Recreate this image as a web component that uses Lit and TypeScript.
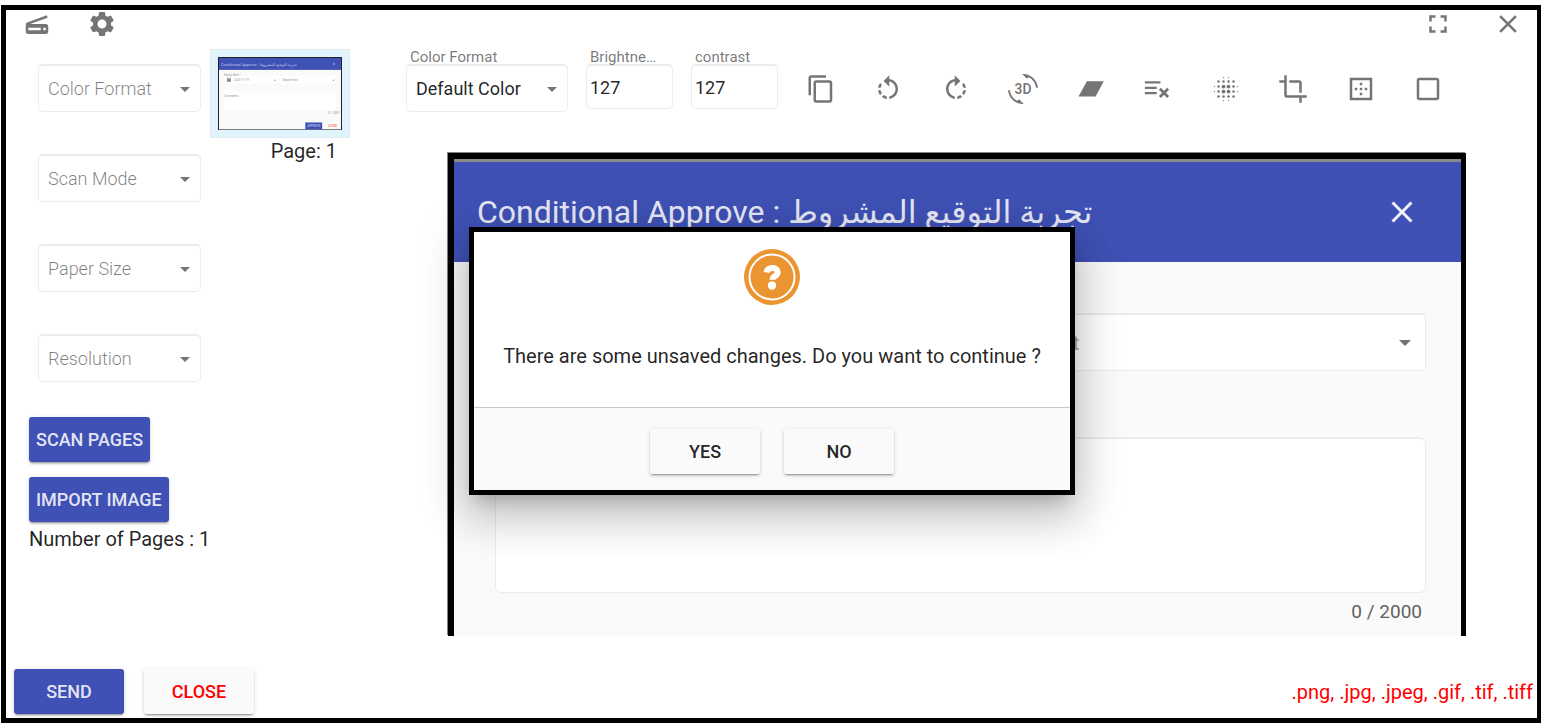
import { LitElement, html, css, svg } from "lit";
import { customElement, state } from "lit/decorators.js";

const dots = (points: number[][], r: number) =>
  points.map(([x, y]) => svg`<circle cx=${x} cy=${y} r=${r}></circle>`);

const icons = {
  scanner: svg`<path d="M4.200 10.700L19.800 5l.7 1.900L6.400 12H19c1.100 0 2 .9 2 2v4c0 1.100-.9 2-2 2H5c-1.100 0-2-.9-2-2v-5.500c0-.8.5-1.600 1.200-1.800zM5 15v2h10v-2zM17 15v2h2v-2z" fill-rule="evenodd"></path>`,
  gear: svg`<path d="M19.140 12.940c.04-.3.060-.610.060-.940 0-.320-.020-.640-.070-.940l2.030-1.580c.180-.140.230-.410.120-.610l-1.920-3.320c-.120-.220-.370-.290-.590-.220l-2.390.960c-.5-.380-1.030-.7-1.620-.940l-.360-2.540c-.040-.240-.240-.410-.480-.410h-3.840c-.240 0-.430.170-.470.410l-.360 2.540c-.590.240-1.130.570-1.620.940l-2.390-.960c-.220-.080-.470 0-.590.220L2.740 8.870c-.120.210-.080.470.120.610l2.030 1.580c-.050.3-.090.630-.090.940s.020.640.070.940l-2.030 1.580c-.180.140-.230.410-.120.610l1.920 3.320c.120.220.370.290.590.220l2.390-.960c.5.380 1.030.7 1.620.940l.360 2.540c.050.240.240.410.480.410h3.840c.240 0 .440-.170.470-.410l.360-2.540c.590-.240 1.130-.560 1.620-.940l2.390.960c.220.080.470 0 .590-.220l1.920-3.320c.120-.220.070-.470-.120-.610l-2.010-1.580zM12 15.600c-1.980 0-3.600-1.620-3.600-3.600s1.620-3.600 3.600-3.600 3.600 1.620 3.600 3.600-1.620 3.600-3.600 3.600z"></path>`,
  fullscreen: svg`<path d="M7 14H5v5h5v-2H7v-3zm-2-4h2V7h3V5H5v5zm12 7h-3v2h5v-5h-2v3zM14 5v2h3v3h2V5h-5z"></path>`,
  close: svg`<path d="M19 6.410L17.590 5 12 10.590 6.410 5 5 6.410 10.590 12 5 17.590 6.410 19 12 13.410 17.590 19 19 17.590 13.410 12z"></path>`,
  copy: svg`<path d="M16 1H4c-1.100 0-2 .9-2 2v14h2V3h12V1zm3 4H8c-1.100 0-2 .9-2 2v14c0 1.100.9 2 2 2h11c1.100 0 2-.9 2-2V7c0-1.100-.9-2-2-2zm0 16H8V7h11v14z"></path>`,
  rotateLeft: svg`<path d="M7.110 8.530L5.700 7.110C4.800 8.270 4.240 9.610 4.070 11h2.020c.140-.870.490-1.720 1.020-2.470zM6.090 13H4.070c.170 1.390.720 2.730 1.620 3.890l1.410-1.420c-.520-.750-.870-1.590-1.010-2.470zm1.010 5.320c1.160.9 2.510 1.440 3.900 1.610V17.900c-.870-.150-1.710-.490-2.460-1.030L7.100 18.320zM13 4.070V1L8.450 5.550 13 10V6.090c2.840.480 5 2.940 5 5.910s-2.160 5.430-5 5.910v2.020c3.950-.490 7-3.850 7-7.930s-3.050-7.440-7-7.930z"></path>`,
  rotateRight: svg`<path d="M15.550 5.550L11 1v3.070C7.060 4.560 4 7.920 4 12s3.050 7.440 7 7.930v-2.020c-2.840-.480-5-2.940-5-5.910s2.160-5.430 5-5.910V10l4.550-4.450zM19.930 11c-.170-1.390-.720-2.730-1.620-3.890l-1.420 1.420c.540.750.880 1.600 1.020 2.470h2.020zM13 17.900v2.020c1.390-.170 2.740-.710 3.900-1.610l-1.440-1.440c-.750.540-1.590.890-2.460 1.030zm3.890-2.420l1.420 1.410c.9-1.160 1.450-2.500 1.620-3.890h-2.020c-.140.870-.480 1.720-1.020 2.480z"></path>`,
  rotate3d: svg`<path d="M7.520 21.480C4.250 19.940 1.910 16.760 1.550 13H.05C.56 19.160 5.710 24 12 24l.66-.03-3.810-3.810-1.330 1.320zM12 0l-.66.03 3.810 3.810 1.330-1.330c3.270 1.550 5.610 4.720 5.960 8.480h1.500C23.440 4.840 18.290 0 12 0z"></path><text x="12" y="16" text-anchor="middle" font-size="11" font-family="Roboto, sans-serif" font-weight="500">3D</text>`,
  skew: svg`<path d="M8.700 5.800h13.500L15.700 18H2z"></path>`,
  removeLines: svg`<path d="M1.500 5.800H14v1.800H1.500zM1.500 10.100H11v1.900H1.500zM1.500 14.400H11v1.800H1.500z"></path><path d="M13.500 11.800l6.600 6.600m0-6.600l-6.600 6.600" fill="none" stroke="#757575" stroke-width="2.200"></path>`,
  blur: svg`${dots([[10, 10], [14, 10], [10, 14], [14, 14]], 1.5)}${dots(
    [[6, 6], [10, 6], [14, 6], [18, 6], [6, 10], [18, 10], [6, 14], [18, 14], [6, 18], [10, 18], [14, 18], [18, 18]], 1)}${dots(
    [[10, 2.8], [14, 2.8], [2.8, 10], [2.8, 14], [21.2, 10], [21.2, 14], [10, 21.2], [14, 21.2]], 0.5)}`,
  crop: svg`<path d="M17 15h2V7c0-1.100-.9-2-2-2H9v2h8v8zM7 17V1H5v4H1v2h4v10c0 1.100.9 2 2 2h10v4h2v-4h4v-2H7z"></path>`,
  border: svg`<path d="M13 7h-2v2h2V7zm0 4h-2v2h2v-2zm4 0h-2v2h2v-2zM3 3v18h18V3H3zm16 16H5V5h14v14zm-6-4h-2v2h2v-2zm-4-4H7v2h2v-2z"></path>`,
  square: svg`<path d="M19 5v14H5V5h14m0-2H5c-1.100 0-2 .9-2 2v14c0 1.100.9 2 2 2h14c1.100 0 2-.9 2-2V5c0-1.100-.9-2-2-2z"></path>`,
};

const icon = (name: keyof typeof icons) =>
  html`<svg class="icon" viewBox="0 0 24 24" aria-hidden="true">${icons[name]}</svg>`;

const tools: [keyof typeof icons, string][] = [
  ["copy", "Copy"],
  ["rotateLeft", "Rotate left"],
  ["rotateRight", "Rotate right"],
  ["rotate3d", "Rotate by angle"],
  ["skew", "Deskew"],
  ["removeLines", "Remove lines"],
  ["blur", "Despeckle"],
  ["crop", "Crop"],
  ["border", "Remove border"],
  ["square", "Select area"],
];

const shared = css`
  * { box-sizing: border-box; }
  button, select, input, textarea { font: inherit; margin: 0; color: inherit; }
  .icon { display: block; width: 30px; height: 30px; fill: #757575; }
  .icon-btn {
    display: grid; place-items: center; padding: 0; border: 0;
    background: none; cursor: pointer;
  }
  .select { position: relative; display: block; }
  .select select {
    appearance: none; display: block; width: 100%; height: 48px; padding: 0 30px 0 9px;
    border: 1px solid #ececec; border-top-width: 2px; border-radius: 5px;
    background: #fff; font-size: 18px;
  }
  .select::after {
    content: ""; position: absolute; right: 11px; top: 23px;
    border: 5px solid transparent; border-top-color: #757575; border-bottom: 0;
  }
  .btn {
    height: 45px; min-width: 110px; padding: 0 7px; border: 0; border-radius: 3px;
    background: #fafafa; color: rgba(0, 0, 0, 0.87); font-size: 18px; font-weight: 500;
    cursor: pointer;
    box-shadow: 0 3px 1px -2px rgba(0, 0, 0, 0.2), 0 2px 2px 0 rgba(0, 0, 0, 0.14), 0 1px 5px 0 rgba(0, 0, 0, 0.12);
  }
  .primary { background: #3f51b5; color: rgba(255, 255, 255, 0.87); }
  .danger { color: #f00; }
`;

@customElement("scanned-page")
class ScannedPage extends LitElement {
  static styles = [shared, css`
    :host {
      display: block; overflow: hidden; background: #fafafa;
      border: 6px solid #000; border-right-width: 5px; border-bottom: 0;
      box-shadow: -1px -1px 0 0 #808080;
      font-family: Roboto, sans-serif;
    }
    .bar {
      display: flex; align-items: center; justify-content: space-between;
      height: 103px; padding: 0 41px 0 23px; border-top: 3px solid #8a8a8a;
      background: #3f51b5; color: #e6e8f5;
    }
    .title { margin: 0; font: 400 32px/40px Roboto, "DejaVu Sans", sans-serif; white-space: nowrap; }
    .bar .icon { width: 36px; height: 36px; fill: #f0f1fa; }
    .form { padding: 51px 35px 0 41px; }
    .fields { display: grid; grid-template-columns: 1fr 1fr; gap: 19px; }
    .fields .select select { height: 58px; padding-left: 3px; font-size: 20px; color: #9e9e9e; }
    .fields .select::after { right: 15px; top: 27px; border-width: 6px; border-bottom: 0; }
    .comments {
      display: block; width: 100%; height: 156px; margin-top: 66px; resize: none;
      border: 1px solid #ececec; border-top-width: 2px; border-radius: 6px; background: #fff;
    }
    .count { margin: 0; padding: 7px 4px 0 0; text-align: right; font-size: 19px; line-height: 24px; color: #616161; }
  `];

  render() {
    return html`
      <div class="bar">
        <h2 class="title">Conditional Approve : <bdi>تجربة التوقيع المشروط</bdi></h2>
        <button class="icon-btn" aria-label="Close form">${icon("close")}</button>
      </div>
      <div class="form">
        <div class="fields">
          <label class="select"><select aria-label="Date"><option></option></select></label>
          <label class="select"><select aria-label="Department"><option>Department</option></select></label>
        </div>
        <textarea class="comments" aria-label="Comments"></textarea>
        <p class="count">0 / 2000</p>
      </div>`;
  }
}

@customElement("app-root")
class AppRoot extends LitElement {
  @state() private asking = true;

  static styles = [shared, css`
    :host {
      display: flex; position: relative; box-sizing: border-box; height: 100vh; padding: 5px 0 0 1px;
      background: #fff; color: rgba(0, 0, 0, 0.87);
      font-family: Roboto, sans-serif; font-size: 20px;
    }
    .frame {
      flex: 1; min-width: 0; display: flex; flex-direction: column;
      border: 5px solid #000; border-right-width: 4px; background: #fff;
    }
    .top { display: flex; gap: 35px; height: 28px; padding: 0 14px 0 16px; align-items: center; }
    .top .end { display: flex; gap: 40px; margin-left: auto; }
    .work { flex: 1; min-height: 0; display: grid; grid-template-columns: 204px 140px 1fr; }
    .side { display: flex; flex-direction: column; align-items: flex-start; padding: 26px 0 0 23px; }
    .options { display: grid; gap: 42px; width: 163px; margin: 0 0 35px 9px; }
    .options select { font-weight: 300; color: rgba(0, 0, 0, 0.5); }
    .side .btn + .btn { margin-top: 15px; }
    .total { margin: 5px 0 0; line-height: 24px; white-space: nowrap; }
    .pages { padding-top: 11px; }
    .thumb { display: block; width: 100%; padding: 7px; border: 1px solid #e4e9ec; background: #e1f3fd; cursor: pointer; }
    .thumb svg { display: block; width: 100%; }
    .page-no { margin: 0; padding: 1px 13px 0 0; text-align: right; line-height: 24px; }
    .main { display: flex; flex-direction: column; min-width: 0; padding: 10px 71px 0 56px; }
    .tools { display: flex; height: 105px; padding-right: 4px; }
    .field { display: block; width: 87px; margin-right: 18px; }
    .wide { width: 162px; }
    .caption {
      display: block; height: 16px; padding: 0 14px 0 4px;
      white-space: nowrap; font-size: 15px; line-height: 18px; color: rgba(0, 0, 0, 0.54);
    }
    .short { height: 18px; margin-bottom: -2px; overflow: hidden; text-overflow: ellipsis; }
    .number {
      display: block; width: 100%; height: 45px; padding: 0 3px; border: 1px solid #ececec;
      border-top-width: 2px; border-radius: 5px; background: #fff; font-size: 18px;
    }
    .strip { flex: 1; display: grid; grid-template-columns: repeat(10, 1fr); height: 82px; margin-left: -9px; }
    scanned-page { flex: 1; min-height: 0; margin-left: 42px; }
    .bottom { display: flex; align-items: center; gap: 20px; padding: 33px 4px 4px 8px; }
    .types { margin: 0 0 0 auto; color: #f00; }
    .overlay { position: absolute; inset: 0 0 2px 3px; display: grid; place-items: center; }
    .dialog {
      width: 606px; max-width: 100%; padding: 0; border: 5px solid #000; background: #fff; text-align: center;
      box-shadow: 0 11px 15px -7px rgba(0, 0, 0, 0.2), 0 24px 38px 3px rgba(0, 0, 0, 0.14), 0 9px 46px 8px rgba(0, 0, 0, 0.12);
    }
    .ask { padding: 17px 16px 39px; }
    .mark { display: block; width: 56px; height: 56px; margin: 0 auto; }
    .ask p { margin: 39px 0 0; line-height: 24px; }
    .answers { display: flex; justify-content: center; gap: 24px; padding: 21px 0 16px; border-top: 1px solid #c8c8c8; background: #fafafa; }
  `];

  private thumbnail() {
    return html`<svg viewBox="0 0 125 74" font-family="Roboto, DejaVu Sans, sans-serif" aria-hidden="true">
      <rect width="125" height="74" fill="#222"></rect>
      <rect x="1" y="1" width="123" height="72" fill="#fafafa"></rect>
      <rect x="1" y="1" width="123" height="12" fill="#3f51b5"></rect>
      <text x="3" y="9" font-size="4" fill="#bcc3e8">Conditional Approve : تجربة التوقيع المشروط</text>
      <path d="M116 6l2 2m0-2l-2 2" stroke="#c5cbea" stroke-width=".5"></path>
      <rect x="6" y="19" width="55" height="8" rx="1" fill="#fff"></rect>
      <rect x="63" y="19" width="56" height="8" rx="1" fill="#fff"></rect>
      <rect x="6" y="35" width="113" height="19" rx="1" fill="#fff"></rect>
      <path d="M9 21h4v4H9z" fill="#888"></path>
      <path d="M9 22h4" stroke="#eee" stroke-width=".5"></path>
      <g fill="#999" font-size="3">
        <text x="6" y="19">Expiry Date *</text><text x="16" y="24">2020-11-19</text>
        <text x="65" y="24">Department</text><text x="6" y="40">Comments</text>
        <text x="111" y="57">0 / 2000</text>
      </g>
      <path d="M56 23h3l-1.500 1.500zM115 23h3l-1.500 1.500z" fill="#aaa"></path>
      <rect x="88" y="66" width="17" height="7" fill="#3f51b5"></rect>
      <text x="90" y="71" font-size="3" fill="#d5d9f0">APPROVE</text>
      <text x="111" y="71" font-size="3" fill="#f33">CLOSE</text>
    </svg>`;
  }

  private answer = () => { this.asking = false; };

  render() {
    return html`
      <div class="frame">
        <header class="top">
          <button class="icon-btn" aria-label="Scanner">${icon("scanner")}</button>
          <button class="icon-btn" aria-label="Settings">${icon("gear")}</button>
          <div class="end">
            <button class="icon-btn" aria-label="Full screen">${icon("fullscreen")}</button>
            <button class="icon-btn" aria-label="Close window">${icon("close")}</button>
          </div>
        </header>
        <div class="work">
          <aside class="side">
            <div class="options">
              ${["Color Format", "Scan Mode", "Paper Size", "Resolution"].map((name) => html`
                <label class="select"><select aria-label=${name}><option>${name}</option></select></label>`)}
            </div>
            <button class="btn primary">SCAN PAGES</button>
            <button class="btn primary">IMPORT IMAGE</button>
            <p class="total">Number of Pages : 1</p>
          </aside>
          <div class="pages">
            <button class="thumb" aria-label="Open page 1">${this.thumbnail()}</button>
            <p class="page-no">Page: 1</p>
          </div>
          <main class="main">
            <div class="tools">
              <div class="field wide">
                <label class="caption" for="format">Color Format</label>
                <div class="select"><select id="format"><option>Default Color</option></select></div>
              </div>
              <div class="field">
                <label class="caption short" for="brightness">Brightness</label>
                <input class="number" id="brightness" value="127" inputmode="numeric" />
              </div>
              <div class="field">
                <label class="caption" for="contrast">contrast</label>
                <input class="number" id="contrast" value="127" inputmode="numeric" />
              </div>
              <div class="strip">
                ${tools.map(([name, label]) => html`
                  <button class="icon-btn" aria-label=${label}>${icon(name)}</button>`)}
              </div>
            </div>
            <scanned-page></scanned-page>
          </main>
        </div>
        <footer class="bottom">
          <button class="btn primary">SEND</button>
          <button class="btn danger">CLOSE</button>
          <p class="types">.png, .jpg, .jpeg, .gif, .tif, .tiff</p>
        </footer>
      </div>
      ${this.asking ? html`
        <div class="overlay">
          <section class="dialog" role="dialog" aria-modal="true" aria-labelledby="question">
            <div class="ask">
              <svg class="mark" viewBox="0 0 56 56" aria-hidden="true">
                <circle cx="28" cy="28" r="28" fill="#eb9532"></circle>
                <circle cx="28" cy="28" r="22.500" fill="none" stroke="#fff" stroke-width="2"></circle>
                <path d="M22.500 23.500c.5-3 3-4.500 6-4.500 3.400 0 5.200 1.800 5.200 4.200 0 4-5.200 3.700-5.200 7.500" fill="none" stroke="#fff" stroke-width="6"></path>
                <circle cx="28" cy="36.500" r="4.200" fill="#fff"></circle>
                <path d="M24 31.700h8" stroke="#eb9532" stroke-width="1"></path>
              </svg>
              <p id="question">There are some unsaved changes. Do you want to continue ?</p>
            </div>
            <div class="answers">
              <button class="btn" @click=${this.answer}>YES</button>
              <button class="btn" @click=${this.answer}>NO</button>
            </div>
          </section>
        </div>` : ""}`;
  }
}
